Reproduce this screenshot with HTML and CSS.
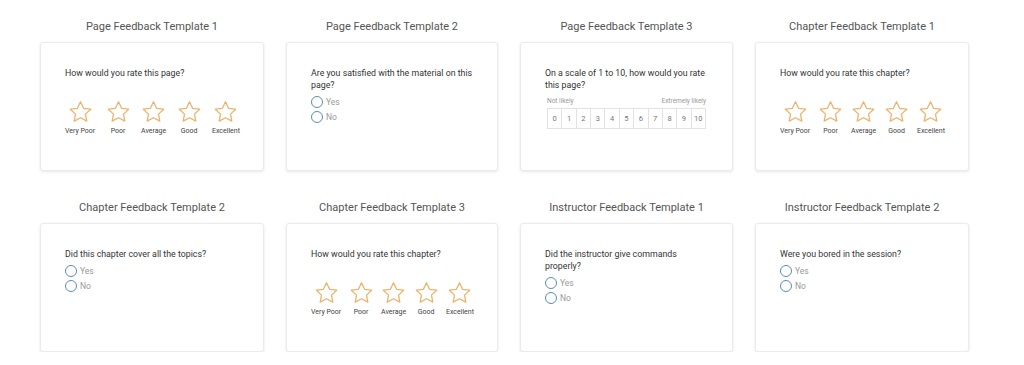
FILE: index.html
```html
<!DOCTYPE html>
<html lang="en">

<head>
    <meta charset="UTF-8" />
    <meta name="viewport" content="width=device-width, initial-scale=1.0" />
    <title>Feedback Templates</title>
    <link rel="stylesheet" href="styles.css">
</head>

<body>
    <svg width="0" height="0" class="defs">
        <defs>
            <path id="star" d="M12.5 1.8l3.1 6.5 7.1.9-5.2 4.9 1.3 7-6.3-3.4-6.3 3.4 1.3-7-5.2-4.9 7.1-.9z" />
        </defs>
    </svg>

    <div class="grid">
        <!-- row 1 -->
        <div class="template">
            <h2 class="title">Page Feedback Template 1</h2>
            <div class="card">
                <p class="question">How would you rate this page?</p>
                <div class="rating">
                    <div class="rate"><svg class="star" viewBox="0 0 25 24"><use href="#star" /></svg><span>Very Poor</span></div>
                    <div class="rate"><svg class="star" viewBox="0 0 25 24"><use href="#star" /></svg><span>Poor</span></div>
                    <div class="rate"><svg class="star" viewBox="0 0 25 24"><use href="#star" /></svg><span>Average</span></div>
                    <div class="rate"><svg class="star" viewBox="0 0 25 24"><use href="#star" /></svg><span>Good</span></div>
                    <div class="rate"><svg class="star" viewBox="0 0 25 24"><use href="#star" /></svg><span>Excellent</span></div>
                </div>
            </div>
        </div>

        <div class="template">
            <h2 class="title">Page Feedback Template 2</h2>
            <div class="card">
                <p class="question">Are you satisfied with the material on this page?</p>
                <div class="options">
                    <label class="option"><span class="radio"></span>Yes</label>
                    <label class="option"><span class="radio"></span>No</label>
                </div>
            </div>
        </div>

        <div class="template">
            <h2 class="title">Page Feedback Template 3</h2>
            <div class="card">
                <p class="question">On a scale of 1 to 10, how would you rate this page?</p>
                <div class="scale">
                    <div class="scale-labels">
                        <span>Not likely</span>
                        <span>Extremely likely</span>
                    </div>
                    <div class="scale-boxes">
                        <span>0</span><span>1</span><span>2</span><span>3</span><span>4</span><span>5</span><span>6</span><span>7</span><span>8</span><span>9</span><span>10</span>
                    </div>
                </div>
            </div>
        </div>

        <div class="template">
            <h2 class="title">Chapter Feedback Template 1</h2>
            <div class="card">
                <p class="question">How would you rate this chapter?</p>
                <div class="rating">
                    <div class="rate"><svg class="star" viewBox="0 0 25 24"><use href="#star" /></svg><span>Very Poor</span></div>
                    <div class="rate"><svg class="star" viewBox="0 0 25 24"><use href="#star" /></svg><span>Poor</span></div>
                    <div class="rate"><svg class="star" viewBox="0 0 25 24"><use href="#star" /></svg><span>Average</span></div>
                    <div class="rate"><svg class="star" viewBox="0 0 25 24"><use href="#star" /></svg><span>Good</span></div>
                    <div class="rate"><svg class="star" viewBox="0 0 25 24"><use href="#star" /></svg><span>Excellent</span></div>
                </div>
            </div>
        </div>

        <!-- row 2 -->
        <div class="template">
            <h2 class="title">Chapter Feedback Template 2</h2>
            <div class="card">
                <p class="question">Did this chapter cover all the topics?</p>
                <div class="options">
                    <label class="option"><span class="radio"></span>Yes</label>
                    <label class="option"><span class="radio"></span>No</label>
                </div>
            </div>
        </div>

        <div class="template">
            <h2 class="title">Chapter Feedback Template 3</h2>
            <div class="card">
                <p class="question">How would you rate this chapter?</p>
                <div class="rating">
                    <div class="rate"><svg class="star" viewBox="0 0 25 24"><use href="#star" /></svg><span>Very Poor</span></div>
                    <div class="rate"><svg class="star" viewBox="0 0 25 24"><use href="#star" /></svg><span>Poor</span></div>
                    <div class="rate"><svg class="star" viewBox="0 0 25 24"><use href="#star" /></svg><span>Average</span></div>
                    <div class="rate"><svg class="star" viewBox="0 0 25 24"><use href="#star" /></svg><span>Good</span></div>
                    <div class="rate"><svg class="star" viewBox="0 0 25 24"><use href="#star" /></svg><span>Excellent</span></div>
                </div>
            </div>
        </div>

        <div class="template">
            <h2 class="title">Instructor Feedback Template 1</h2>
            <div class="card">
                <p class="question">Did the instructor give commands properly?</p>
                <div class="options">
                    <label class="option"><span class="radio"></span>Yes</label>
                    <label class="option"><span class="radio"></span>No</label>
                </div>
            </div>
        </div>

        <div class="template">
            <h2 class="title">Instructor Feedback Template 2</h2>
            <div class="card">
                <p class="question">Were you bored in the session?</p>
                <div class="options">
                    <label class="option"><span class="radio"></span>Yes</label>
                    <label class="option"><span class="radio"></span>No</label>
                </div>
            </div>
        </div>
    </div>
</body>

</html>
```

FILE: styles.css
```css
body {
    margin: 0;
    background: #fff;
    font-family: Roboto, "Liberation Sans", Arial, sans-serif;
    color: #333;
}

.defs {
    position: absolute;
}

.grid {
    display: grid;
    grid-template-columns: 224px 212px 213px 214px;
    column-gap: 22px;
    row-gap: 29px;
    padding: 19px 0 0 40px;
}

.title {
    margin: 0 0 7px;
    font-size: 11px;
    line-height: 16px;
    font-weight: 400;
    color: #555;
    text-align: center;
}

.card {
    height: 129px;
    box-sizing: border-box;
    padding: 24px 23px 0 24px;
    border: 1px solid #ebebeb;
    border-radius: 3px;
    box-shadow: 0 1px 3px rgba(0, 0, 0, 0.1);
    background: #fff;
}

.question {
    margin: 0;
    font-size: 8.8px;
    line-height: 12px;
    color: #333;
}

/* stars */
.rating {
    display: flex;
    justify-content: space-between;
    margin-top: 21px;
}

.rate {
    display: flex;
    flex-direction: column;
    align-items: center;
}

.star {
    width: 25px;
    height: 24px;
    fill: none;
    stroke: #ebb46c;
    stroke-width: 1.3;
    stroke-linejoin: round;
}

.rate span {
    margin-top: 3px;
    font-size: 7px;
    line-height: 9px;
    color: #444;
}

/* yes / no */
.options {
    margin-top: 3px;
}

.option {
    display: flex;
    align-items: center;
    height: 15px;
    font-size: 8.5px;
    color: #999;
}

.radio {
    width: 10px;
    height: 10px;
    border: 1.5px solid #5b8db5;
    border-radius: 50%;
    margin-right: 3px;
}

/* 0 - 10 scale */
.scale {
    width: 159px;
    margin: 6px 0 0 2px;
}

.scale-labels {
    display: flex;
    justify-content: space-between;
    font-size: 6.5px;
    line-height: 8px;
    color: #999;
    margin-bottom: 3px;
}

.scale-boxes {
    display: flex;
    border: 1px solid #e2e2e2;
    border-right: 0;
}

.scale-boxes span {
    flex: 1;
    height: 19px;
    line-height: 19px;
    text-align: center;
    font-size: 7.5px;
    color: #777;
    border-right: 1px solid #e2e2e2;
}
```
